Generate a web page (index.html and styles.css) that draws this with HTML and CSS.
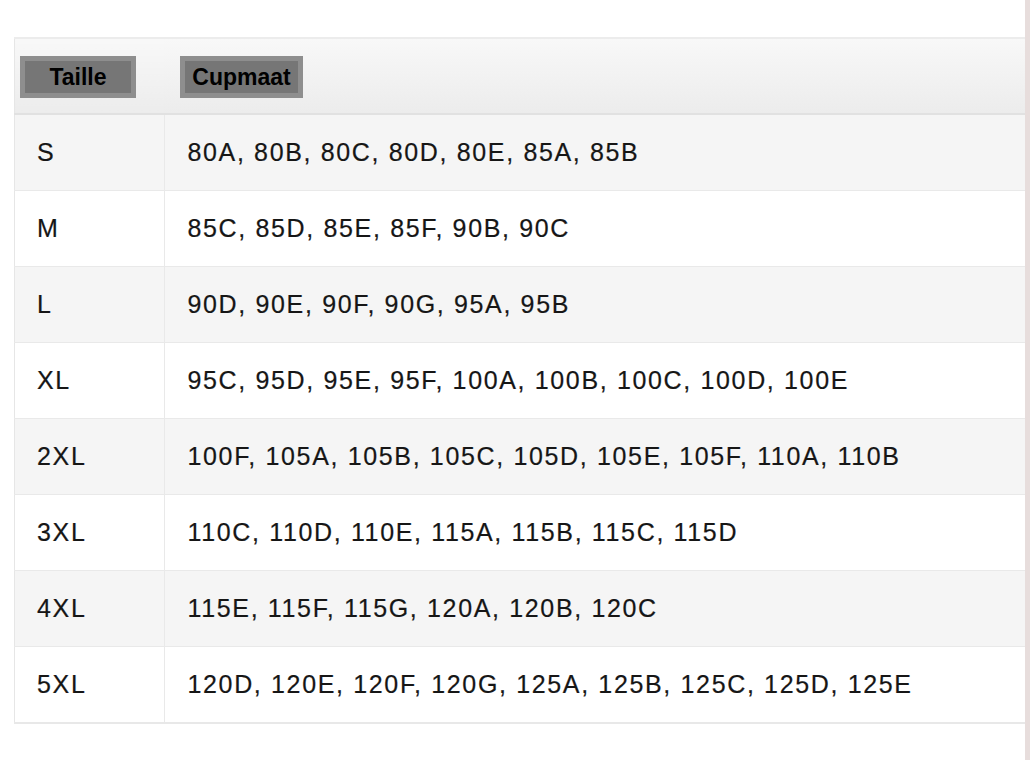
FILE: index.html
```html
<!DOCTYPE html>
<html lang="nl">
<head>
<meta charset="utf-8">
<title>Maattabel</title>
<link rel="stylesheet" href="styles.css">
</head>
<body>
<div class="page">
  <main class="content">
    <table class="sizes">
      <thead>
        <tr class="head-row">
          <th class="col-size"><span class="tag tag-size">Taille</span></th>
          <th class="col-cup"><span class="tag tag-cup">Cupmaat</span></th>
        </tr>
      </thead>
      <tbody>
        <tr class="alt"><td class="c1">S</td><td class="c2">80A, 80B, 80C, 80D, 80E, 85A, 85B</td></tr>
        <tr><td class="c1">M</td><td class="c2">85C, 85D, 85E, 85F, 90B, 90C</td></tr>
        <tr class="alt"><td class="c1">L</td><td class="c2">90D, 90E, 90F, 90G, 95A, 95B</td></tr>
        <tr><td class="c1">XL</td><td class="c2">95C, 95D, 95E, 95F, 100A, 100B, 100C, 100D, 100E</td></tr>
        <tr class="alt"><td class="c1">2XL</td><td class="c2">100F, 105A, 105B, 105C, 105D, 105E, 105F, 110A, 110B</td></tr>
        <tr><td class="c1">3XL</td><td class="c2">110C, 110D, 110E, 115A, 115B, 115C, 115D</td></tr>
        <tr class="alt"><td class="c1">4XL</td><td class="c2">115E, 115F, 115G, 120A, 120B, 120C</td></tr>
        <tr><td class="c1">5XL</td><td class="c2">120D, 120E, 120F, 120G, 125A, 125B, 125C, 125D, 125E</td></tr>
      </tbody>
    </table>
  </main>
  <aside class="edge"></aside>
</div>
</body>
</html>
```
FILE: styles.css
```css
html, body {
  margin: 0;
  padding: 0;
  background: #ffffff;
}
.page {
  display: flex;
  width: 1030px;
  height: 760px;
  overflow: hidden;
}
.content {
  flex: 1;
  padding: 37px 0 0 14px;
}
.edge {
  width: 5px;
  background: #e7dddc;
}
.sizes {
  width: 1011px;
  table-layout: fixed;
  border-collapse: collapse;
  font-family: "Liberation Sans", Arial, Helvetica, sans-serif;
  color: #161616;
  border-left: 1px solid #e6e6e6;
  border-bottom: 2px solid #e8e8e8;
}
.head-row th {
  height: 74px;
  padding: 0;
  text-align: left;
  vertical-align: middle;
  background: linear-gradient(#f8f8f8, #ececec);
  border-top: 2px solid #ececec;
  border-bottom: 2px solid #e1e1e1;
}
.col-size {
  width: 144px;
  padding-left: 5px !important;
}
.col-cup {
  padding-left: 16px !important;
}
.tag {
  display: inline-block;
  box-sizing: border-box;
  height: 42px;
  line-height: 32px;
  border: 5px solid #8e8e8e;
  background: #767676;
  color: #000;
  font-weight: bold;
  font-size: 23px;
  text-align: center;
  margin-top: 1px;
}
.tag-size { width: 116px; }
.tag-cup { width: 123px; }
.sizes td {
  height: 75px;
  padding: 0;
  font-size: 25px;
  letter-spacing: 1.65px;
  vertical-align: middle;
  border-bottom: 1px solid #e9e9e9;
  background: #ffffff;
  -webkit-text-stroke: 0.2px #161616;
}
.sizes tr.alt td {
  background: #f5f5f5;
}
.sizes tbody tr:last-child td {
  border-bottom: none;
}
.c1 {
  padding-left: 22px !important;
  border-right: 1px solid #e9e9e9;
}
.c2 {
  padding-left: 23px !important;
}
```
